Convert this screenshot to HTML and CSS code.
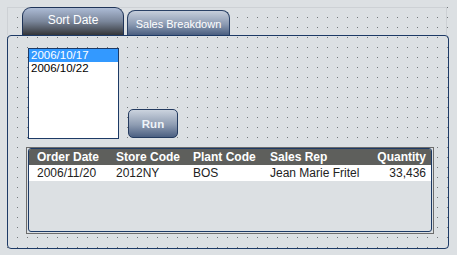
FILE: index.html
```html
<!DOCTYPE html>
<html lang="en">
<head>
<meta charset="UTF-8">
<meta name="viewport" content="width=device-width, initial-scale=1.0">
<title>Sales Report</title>
<link rel="stylesheet" href="styles.css">
</head>
<body>
<div class="page">
  <div class="tabs">
    <div class="tab tab-active">Sort Date</div>
    <div class="tab">Sales Breakdown</div>
  </div>
  <div class="panel">
    <div class="controls">
      <ul class="listbox">
        <li class="selected">2006/10/17</li>
        <li>2006/10/22</li>
      </ul>
      <button class="run-btn">Run</button>
    </div>
    <div class="grid-wrap">
      <div class="grid">
        <div class="grid-row grid-head">
          <span>Order Date</span>
          <span>Store Code</span>
          <span>Plant Code</span>
          <span>Sales Rep</span>
          <span class="num">Quantity</span>
        </div>
        <div class="grid-row">
          <span>2006/11/20</span>
          <span>2012NY</span>
          <span>BOS</span>
          <span>Jean Marie Fritel</span>
          <span class="num">33,436</span>
        </div>
      </div>
    </div>
  </div>
</div>
</body>
</html>
```

FILE: styles.css
```css
body {
  margin: 0;
  font-family: "Liberation Sans", Arial, sans-serif;
  background-color: #dce0e3;
  /* designer dot grid */
  background-image: conic-gradient(from 270deg at 1px 1px, #74787c 90deg, transparent 0);
  background-size: 10px 10px;
  background-position: 7px 7px;
  height: 255px;
  overflow: hidden;
}
.page {
  padding: 7px 0 0 7px;
}
.tabs {
  box-sizing: border-box;
  width: 440px;
  height: 28px;
  border: 1px solid #cdd1d5;
  border-bottom: none;
  padding-left: 14px;
  display: flex;
  align-items: flex-end;
}
.tab {
  box-sizing: border-box;
  width: 103px;
  height: 25px;
  margin-left: 3px;
  border: 1px solid #2a4166;
  border-bottom: none;
  border-radius: 8px 8px 0 0;
  background: linear-gradient(#c6cedb, #8c9bb3 55%, #4b5f80);
  color: #fff;
  font-size: 11px;
  line-height: 14px;
  padding-top: 6px;
  text-align: center;
}
.tab-active {
  width: 102px;
  height: 28px;
  margin-left: 0;
  padding-top: 5px;
  border-color: #1f3458;
  border-radius: 9px 9px 0 0;
  background: linear-gradient(#acbbd5, #7a869a 50%, #333538);
  font-size: 12px;
}
.panel {
  box-sizing: border-box;
  width: 442px;
  height: 214px;
  border: 1px solid #1d3a66;
  border-radius: 4px;
  padding: 12px 0 0 20px;
}
.controls {
  display: flex;
  align-items: flex-end;
}
.listbox {
  box-sizing: border-box;
  width: 91px;
  height: 91px;
  margin: 0;
  padding: 0;
  list-style: none;
  background: #fff;
  border: 1px solid #1d3a66;
  font-size: 11.5px;
}
.listbox li {
  height: 13px;
  line-height: 13px;
  padding-left: 2px;
  color: #000;
}
.listbox .selected {
  background: #3399ff;
  color: #fff;
}
.run-btn {
  box-sizing: border-box;
  width: 50px;
  height: 29px;
  margin: 0 0 1px 9px;
  padding: 0;
  border: 1px solid #243b60;
  border-radius: 5px;
  background: linear-gradient(#cbd3de, #8e9cb2 55%, #4c6082);
  color: #eef3f8;
  font-family: "Liberation Sans", Arial, sans-serif;
  font-size: 11.5px;
  font-weight: bold;
}
.grid-wrap {
  box-sizing: border-box;
  width: 408px;
  height: 87px;
  margin: 8px 0 0 -2px;
  padding: 0 1px 1px 1px;
  border: 1px solid #6c6c6c;
  background: #dce0e3;
}
.grid {
  box-sizing: border-box;
  height: 100%;
  border: 1px solid #1d3a66;
  border-radius: 3px;
  overflow: hidden;
  background: #dce0e3;
}
.grid-row {
  display: grid;
  grid-template-columns: 79px 77px 77px 1fr auto;
  height: 16px;
  line-height: 16px;
  padding: 0 5px 0 8px;
  background: #fff;
  color: #222;
  font-size: 12px;
}
.grid-head {
  background: #5e5f5c;
  color: #fff;
  font-weight: bold;
}
.num {
  text-align: right;
}
```
